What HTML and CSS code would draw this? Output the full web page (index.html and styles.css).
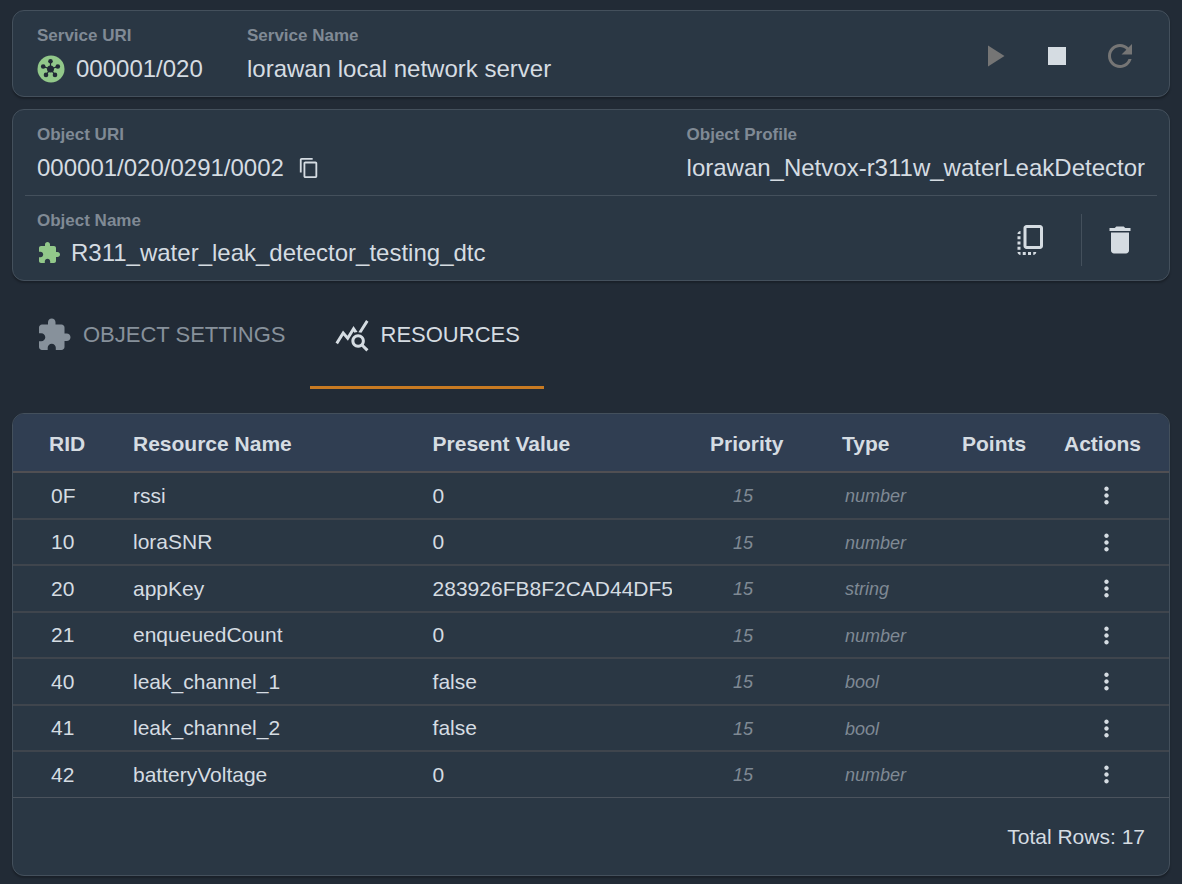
FILE: index.html
```html
<!DOCTYPE html>
<html lang="en">
<head>
<meta charset="utf-8">
<title>Object resources</title>
<link rel="stylesheet" href="styles.css">
</head>
<body>
<svg class="sprite" aria-hidden="true">
  <symbol id="puzzle" viewBox="0 0 24 24"><path d="M20.5 11H19V7c0-1.1-.9-2-2-2h-4V3.5C13 2.12 11.88 1 10.5 1S8 2.12 8 3.5V5H4c-1.1 0-1.99.9-1.99 2v3.8H3.5c1.49 0 2.7 1.21 2.7 2.7s-1.21 2.7-2.7 2.7H2V20c0 1.1.9 2 2 2h3.8v-1.5c0-1.49 1.21-2.7 2.7-2.7s2.7 1.21 2.7 2.7V22H17c1.1 0 2-.9 2-2v-4h1.5c1.38 0 2.5-1.12 2.5-2.5S21.88 11 20.5 11z"/></symbol>
  <symbol id="more" viewBox="0 0 24 24"><path d="M12 8c1.1 0 2-.9 2-2s-.9-2-2-2-2 .9-2 2 .9 2 2 2zm0 2c-1.1 0-2 .9-2 2s.9 2 2 2 2-.9 2-2-.9-2-2-2zm0 6c-1.1 0-2 .9-2 2s.9 2 2 2 2-.9 2-2-.9-2-2-2z"/></symbol>
</svg>
<main class="page">
  <section class="card service">
    <div class="field service-uri">
      <span class="label">Service URI</span>
      <div class="value uri">
        <svg class="icon hub" viewBox="0 0 28 28"><circle class="hub-disc" cx="14" cy="14" r="13.5"/><path class="hub-spokes" d="M13.500 14V6.200M13.500 14l7.200-2.400M13.500 14l4.500 5.900M13.500 14l-4.500 5.900M13.500 14l-7.200-2.400"/><g class="hub-nodes"><circle cx="13.500" cy="14" r="3.500"/><circle cx="13.500" cy="6.200" r="2.300"/><circle cx="20.800" cy="11.500" r="2.300"/><circle cx="18" cy="19.900" r="2.300"/><circle cx="9" cy="19.900" r="2.300"/><circle cx="6.200" cy="11.500" r="2.300"/></g></svg>
        <span>000001/020</span>
      </div>
    </div>
    <div class="field">
      <span class="label">Service Name</span>
      <div class="value">lorawan local network server</div>
    </div>
    <div class="controls">
      <button class="icon-button" type="button" aria-label="Start" disabled><svg class="icon large" viewBox="0 0 24 24"><path d="M8 5v14l11-7z"/></svg></button>
      <button class="icon-button" type="button" aria-label="Stop"><svg class="icon large" viewBox="0 0 24 24"><path d="M6 6h12v12H6z"/></svg></button>
      <button class="icon-button" type="button" aria-label="Restart" disabled><svg class="icon large" viewBox="0 0 24 24"><path d="M17.650 6.350C16.200 4.900 14.210 4 12 4c-4.420 0-7.990 3.580-7.990 8s3.570 8 7.990 8c3.730 0 6.840-2.550 7.730-6h-2.080c-.82 2.330-3.040 4-5.650 4-3.310 0-6-2.690-6-6s2.690-6 6-6c1.660 0 3.140.69 4.220 1.780L13 11h7V4l-2.350 2.350z"/></svg></button>
    </div>
  </section>

  <section class="card object">
    <div class="object-row">
      <div class="field">
        <span class="label">Object URI</span>
        <div class="value">
          <span>000001/020/0291/0002</span>
          <button class="copy-button" type="button" aria-label="Copy URI"><svg class="icon copy" viewBox="0 0 24 24"><path d="M16 1H4c-1.100 0-2 .9-2 2v14h2V3h12V1zm3 4H8c-1.100 0-2 .9-2 2v14c0 1.100.9 2 2 2h11c1.100 0 2-.9 2-2V7c0-1.100-.9-2-2-2zm0 16H8V7h11v14z"/></svg></button>
        </div>
      </div>
      <div class="field">
        <span class="label">Object Profile</span>
        <div class="value">lorawan_Netvox-r311w_waterLeakDetector</div>
      </div>
    </div>
    <div class="object-row name-row">
      <div class="field">
        <span class="label">Object Name</span>
        <div class="value named">
          <svg class="icon green"><use href="#puzzle"/></svg>
          <span>R311_water_leak_detector_testing_dtc</span>
        </div>
      </div>
      <div class="object-actions">
        <button class="icon-button" type="button" aria-label="Duplicate object"><svg class="icon large" viewBox="0 0 24 24"><path d="M18 2H9c-1.100 0-2 .9-2 2v12c0 1.100.9 2 2 2h9c1.100 0 2-.9 2-2V4c0-1.100-.9-2-2-2zm0 14H9V4h9v12zM3 15v-2h2v2H3zm0-5.500h2v2H3v-2zM10 20h2v2h-2v-2zm-7-1.500v-2h2v2H3zM5 22c-1.100 0-2-.9-2-2h2v2zm3.500 0h-2v-2h2v2zm5 0v-2h2c0 1.100-.9 2-2 2zM5 6v2H3c0-1.100.9-2 2-2z"/></svg></button>
        <span class="separator"></span>
        <button class="icon-button" type="button" aria-label="Delete object"><svg class="icon large" viewBox="0 0 24 24"><path d="M6 19c0 1.100.9 2 2 2h8c1.100 0 2-.9 2-2V7H6v12zM18 4h-2.500l-.71-.71c-.18-.18-.44-.29-.7-.29H9.910c-.26 0-.52.11-.7.29L8.500 4H5v2h14V4z"/></svg></button>
      </div>
    </div>
  </section>

  <nav class="tabs" role="tablist">
    <button class="tab" type="button" role="tab" aria-selected="false"><svg class="icon large"><use href="#puzzle"/></svg>OBJECT SETTINGS</button>
    <button class="tab" type="button" role="tab" aria-selected="true"><svg class="icon large" viewBox="0 0 24 24"><path d="M19.880 18.470c.44-.7.7-1.510.7-2.390 0-2.490-2.010-4.500-4.500-4.500s-4.500 2.010-4.500 4.500 2.010 4.500 4.490 4.500c.88 0 1.700-.26 2.390-.7L21.580 23 23 21.580l-3.120-3.110zm-3.800.11c-1.380 0-2.500-1.120-2.500-2.500s1.120-2.500 2.500-2.500 2.500 1.120 2.500 2.500-1.120 2.500-2.500 2.500zM15.720 10.080c-.74.02-1.450.18-2.100.45l-.55-.83-3.800 6.180-3.010-3.520-3.630 5.810L1 17l5-8 3 3.500L13 6l2.720 4.080zm2.590.5c-.64-.28-1.330-.45-2.050-.49L21.380 2 23 3.180l-4.690 7.400z"/></svg>RESOURCES</button>
  </nav>

  <section class="card resources">
    <table class="grid">
      <colgroup><col class="c-rid"><col><col class="c-value"><col class="c-priority"><col class="c-type"><col class="c-points"><col class="c-actions"></colgroup>
      <thead><tr><th class="rid">RID</th><th>Resource Name</th><th>Present Value</th><th>Priority</th><th>Type</th><th>Points</th><th>Actions</th></tr></thead>
      <tbody>
        <tr><td class="rid">0F</td><td>rssi</td><td>0</td><td class="muted priority">15</td><td class="muted type">number</td><td></td><td class="actions"><button class="more" type="button" aria-label="Actions for rssi"><svg class="icon dots"><use href="#more"/></svg></button></td></tr>
        <tr><td class="rid">10</td><td>loraSNR</td><td>0</td><td class="muted priority">15</td><td class="muted type">number</td><td></td><td class="actions"><button class="more" type="button" aria-label="Actions for loraSNR"><svg class="icon dots"><use href="#more"/></svg></button></td></tr>
        <tr><td class="rid">20</td><td>appKey</td><td><div class="clip">283926FB8F2CAD44DF5</div></td><td class="muted priority">15</td><td class="muted type">string</td><td></td><td class="actions"><button class="more" type="button" aria-label="Actions for appKey"><svg class="icon dots"><use href="#more"/></svg></button></td></tr>
        <tr><td class="rid">21</td><td>enqueuedCount</td><td>0</td><td class="muted priority">15</td><td class="muted type">number</td><td></td><td class="actions"><button class="more" type="button" aria-label="Actions for enqueuedCount"><svg class="icon dots"><use href="#more"/></svg></button></td></tr>
        <tr><td class="rid">40</td><td>leak_channel_1</td><td>false</td><td class="muted priority">15</td><td class="muted type">bool</td><td></td><td class="actions"><button class="more" type="button" aria-label="Actions for leak_channel_1"><svg class="icon dots"><use href="#more"/></svg></button></td></tr>
        <tr><td class="rid">41</td><td>leak_channel_2</td><td>false</td><td class="muted priority">15</td><td class="muted type">bool</td><td></td><td class="actions"><button class="more" type="button" aria-label="Actions for leak_channel_2"><svg class="icon dots"><use href="#more"/></svg></button></td></tr>
        <tr><td class="rid">42</td><td>batteryVoltage</td><td>0</td><td class="muted priority">15</td><td class="muted type">number</td><td></td><td class="actions"><button class="more" type="button" aria-label="Actions for batteryVoltage"><svg class="icon dots"><use href="#more"/></svg></button></td></tr>
      </tbody>
    </table>
    <footer class="total">Total Rows: 17</footer>
  </section>
</main>
</body>
</html>
```
FILE: styles.css
```css
* { box-sizing: border-box; }

body {
  margin: 0;
  background: #222b36;
  color: #d5dce2;
  font-family: "Liberation Sans", Arial, sans-serif;
  font-size: 21px;
}

button {
  padding: 0;
  border: 0;
  background: none;
  color: inherit;
  font: inherit;
}

.sprite { display: none; }

.page {
  display: flex;
  flex-direction: column;
  padding: 10px 12px 8px;
}

.card {
  border: 1px solid #44505c;
  border-radius: 12px;
  background: #2a3744;
  box-shadow: 0 2px 2px rgba(0, 0, 0, 0.25);
}

.icon {
  display: block;
  flex: none;
  width: 24px;
  height: 24px;
  fill: currentColor;
}
.icon.large { width: 36px; height: 36px; }
.icon.hub { width: 28px; height: 28px; }
.icon.copy { width: 22px; height: 22px; }
.icon.dots { width: 27px; height: 27px; }
.icon.green { color: #92c88a; }

.hub-disc { fill: #92c88a; }
.hub-nodes { fill: #222b36; }
.hub-spokes { fill: none; stroke: #222b36; stroke-width: 1.2; }

.label {
  display: block;
  color: #808a95;
  font-size: 17px;
  font-weight: bold;
  line-height: 20px;
}

.value {
  display: flex;
  align-items: center;
  gap: 14px;
  min-height: 32px;
  margin-top: 7px;
  font-size: 24px;
  line-height: 32px;
}
.value.uri { gap: 11px; }
.value.named { gap: 10px; margin-top: 6px; }

.service {
  display: flex;
  align-items: center;
  padding: 15px 31px 11px 24px;
  margin-bottom: 12px;
}
.service-uri { width: 210px; }

.controls {
  display: flex;
  gap: 27px;
  margin-left: auto;
}

.icon-button:disabled { color: #757575; }
.icon-button, .copy-button, .more { display: block; }

.object { padding: 0 12px; margin-bottom: 12px; }

.object-row {
  display: flex;
  justify-content: space-between;
  padding: 15px 12px 11px;
}
.name-row {
  border-top: 1px solid #44505c;
  align-items: center;
  padding: 15px 19px 11px 12px;
}

.object-actions {
  display: flex;
  align-items: center;
}
.separator {
  width: 1px;
  height: 52px;
  margin: 0 20px 0 32px;
  background: #44505c;
}

.tabs {
  display: flex;
  height: 96px;
  margin-bottom: 24px;
}
.tab {
  display: flex;
  align-items: center;
  gap: 11px;
  padding: 0 24px 10px;
  border-bottom: 3px solid transparent;
  color: #87919b;
  font-size: 22px;
}
.tab[aria-selected="true"] {
  border-bottom-color: #c87a22;
  color: #d5dce2;
}

.resources { overflow: hidden; }

.grid {
  width: 100%;
  border-collapse: separate;
  border-spacing: 0;
  table-layout: fixed;
}
.c-rid { width: 107px; }
.c-value { width: 24%; }
.c-priority { width: 132px; }
.c-type { width: 120px; }
.c-points { width: 102px; }
.c-actions { width: 118px; }

th, td {
  padding: 0 13px;
  text-align: left;
  vertical-align: middle;
}
th {
  height: 59px;
  padding-top: 2px;
  border-bottom: 2px solid #504f53;
  background: #303e52;
}
th.rid { padding-left: 36px; }

td {
  height: 46px;
  border-bottom: 2px solid #3f454d;
}
tr:nth-child(odd) td { height: 47px; }
tbody tr:last-child td { height: 46px; border-bottom: 1px solid #4b535d; }
td.rid { padding-left: 38px; }

.clip {
  width: 239px;
  overflow: hidden;
  white-space: nowrap;
}

td.muted {
  padding-top: 2px;
  color: #7f8994;
  font-size: 18px;
  font-style: italic;
}
td.priority { padding-left: 36px; }
td.type { padding-left: 16px; }
td.actions { padding-left: 42px; }

.total {
  padding: 24px;
  line-height: 29px;
  text-align: right;
}
```
